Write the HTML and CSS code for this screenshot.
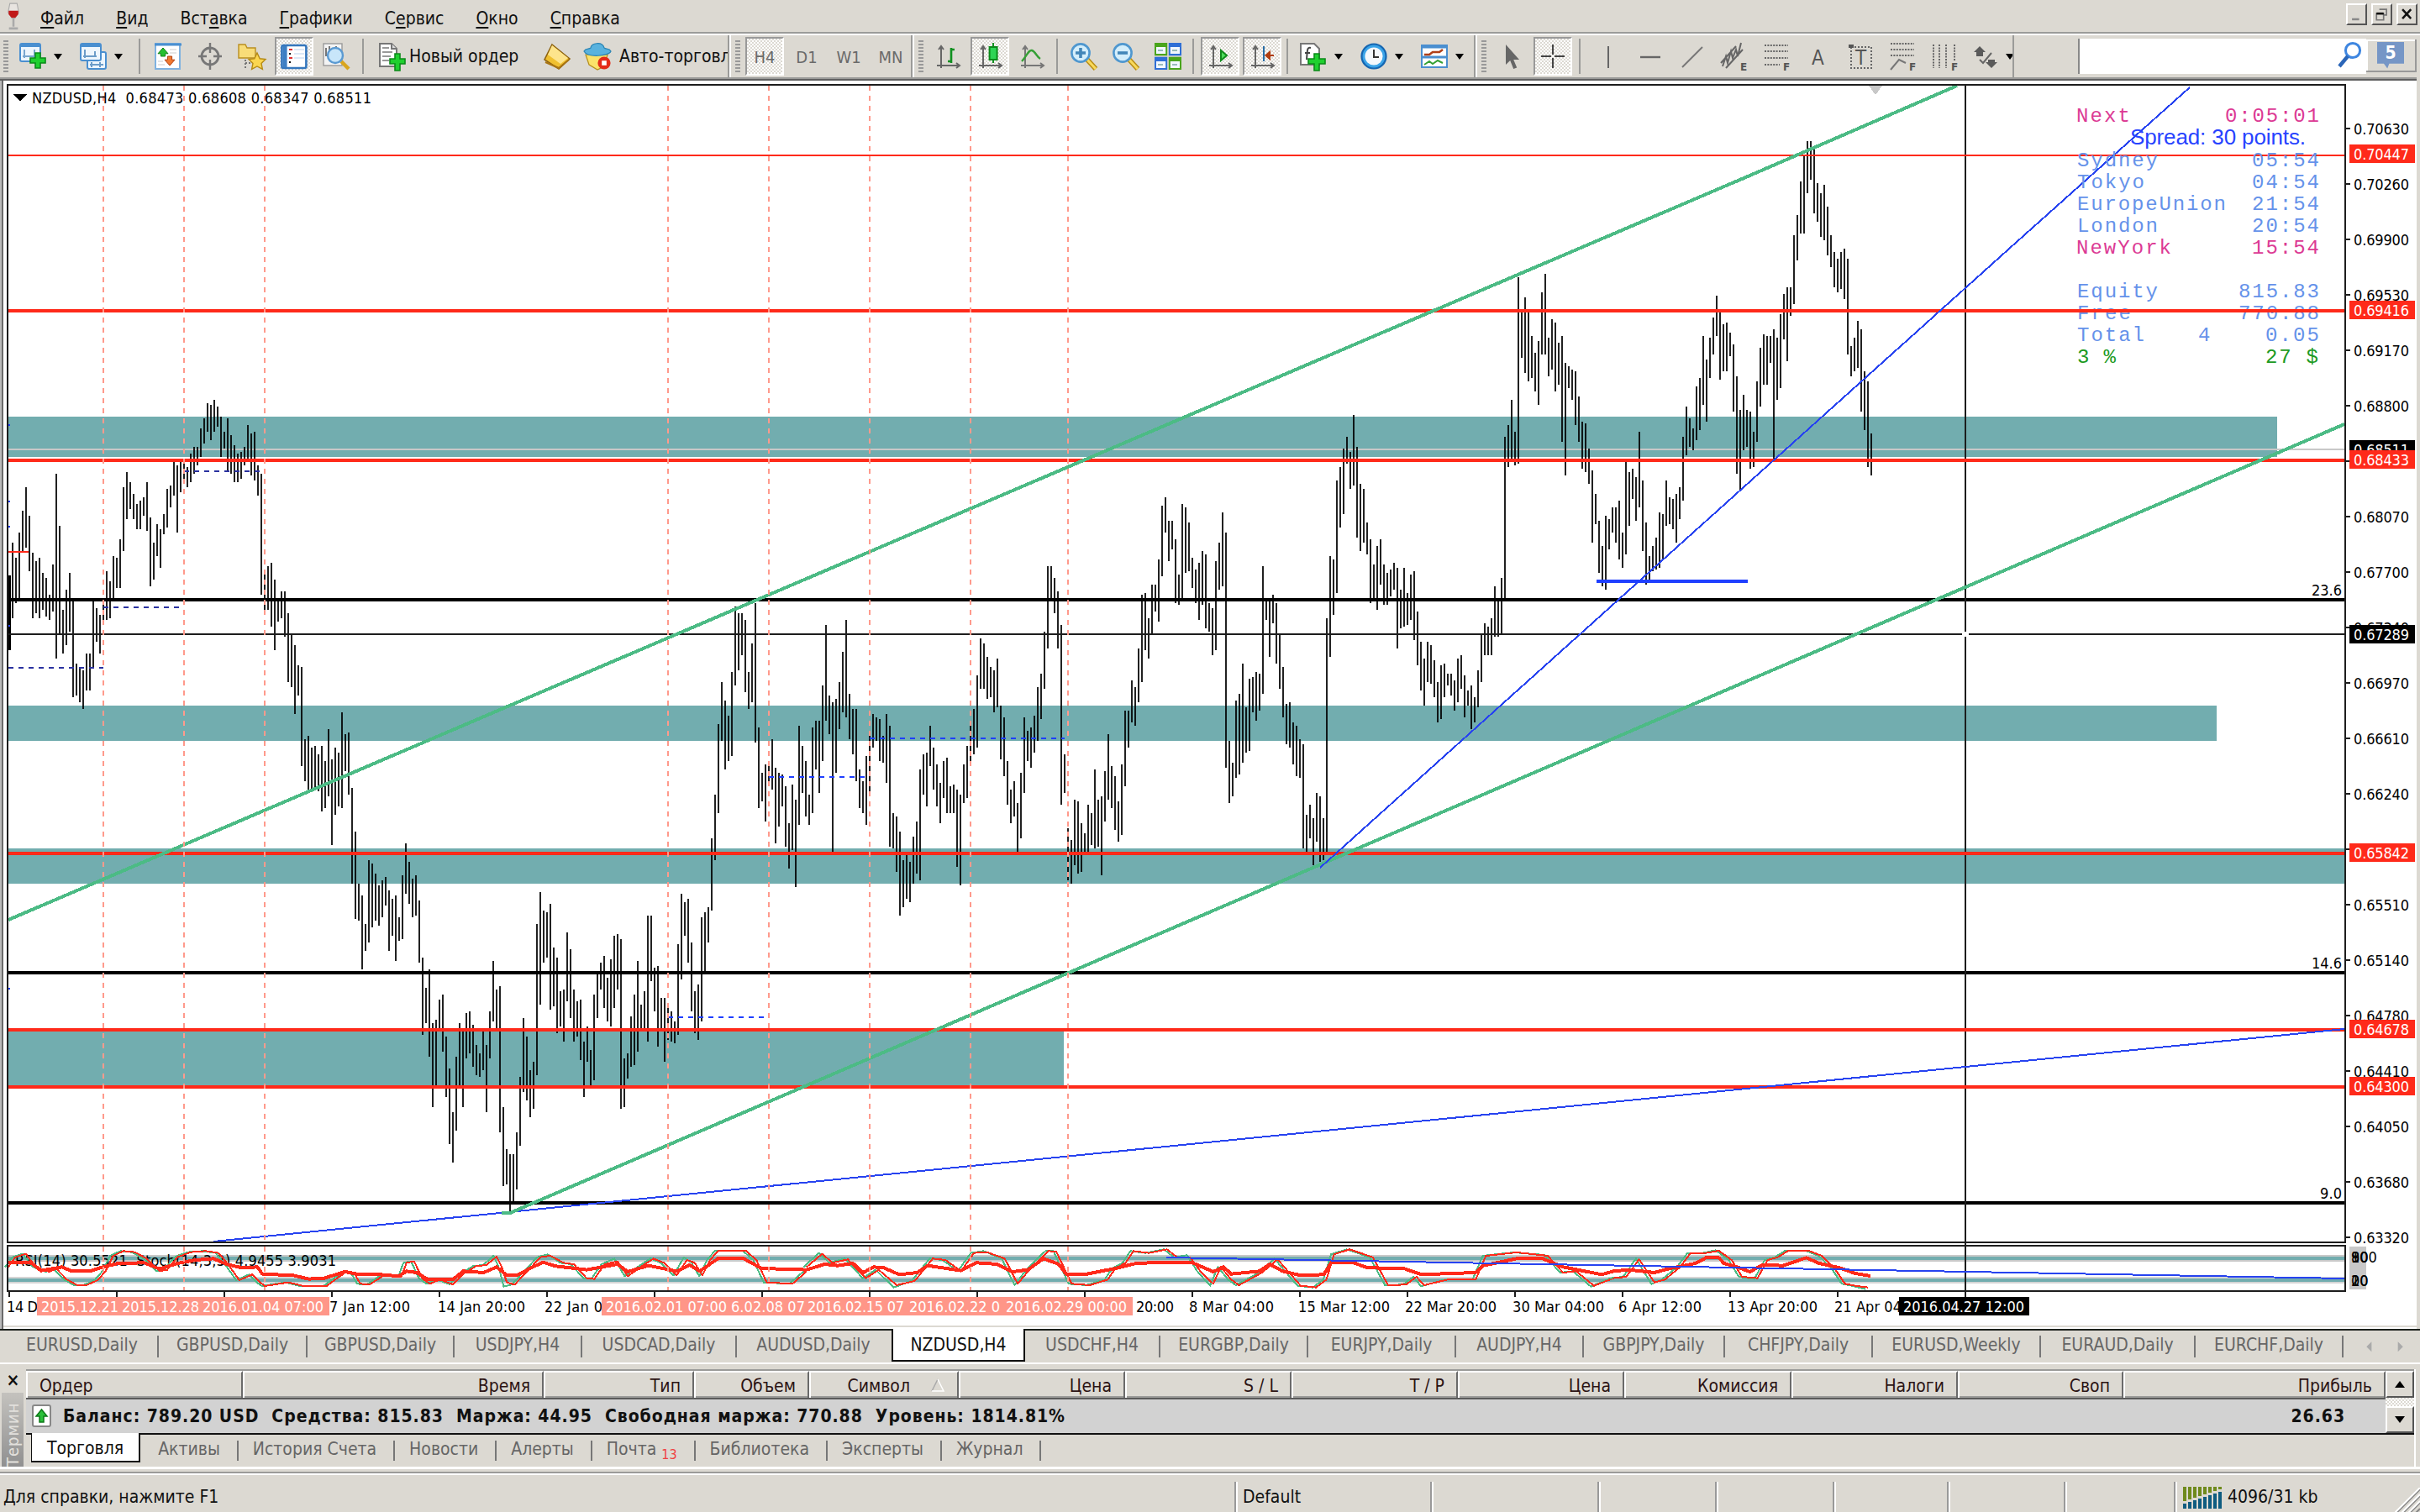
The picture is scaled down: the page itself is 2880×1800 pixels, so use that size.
FILE: index.html
```html
<!DOCTYPE html>
<html lang="ru">

<head>

  <meta charset="utf-8">

  <title>NZDUSD,H4</title>

  <link rel="stylesheet" href="styles.css">

</head>

<body>

<!-- menu -->
<div class="menubar">
  <svg class="logo" viewBox="0 0 8 16"><path d="M2 1h4l1 5-2 3H3L1 6z" fill="#e8e4e0" stroke="#aaa" stroke-width=".5"/><path d="M1.3 5h5.4v2L5 9H3L1.3 7z" fill="#c01818"/><path d="M4 9v5M1.5 15h5" stroke="#aaa" stroke-width="1.2"/></svg>
  <span><u>Ф</u>айл</span>
  <span><u>В</u>ид</span>
  <span>Вст<u>а</u>вка</span>
  <span><u>Г</u>рафики</span>
  <span>С<u>е</u>рвис</span>
  <span><u>О</u>кно</span>
  <span><u>С</u>правка</span>
  <div class="winbtns">
    <b><svg viewBox="0 0 24 26"><path d="M5 20h10" stroke="#888" stroke-width="3"/></svg></b>
    <b><svg viewBox="0 0 24 26"><path d="M8 6h10v8h-4M4 12h10v9H4z" fill="none" stroke="#777" stroke-width="2"/><path d="M4 12h10" stroke="#000" stroke-width="3"/></svg></b>
    <b><svg viewBox="0 0 24 26"><path d="M5 6l12 13M17 6L5 19" stroke="#111" stroke-width="3"/></svg></b>
  </div>
</div>

<!-- toolbars -->
<div class="toolbar">

  <div class="band band-main">
    <i class="grip"></i>
    <span class="drop"><svg viewBox="0 0 16 16"><rect x=".5" y=".5" width="12" height="10.5" rx="1" fill="#eef6fd" stroke="#4a8fd0"/><path d="M1 1.5h11" stroke="#4a8fd0" stroke-width="2"/><path d="M3 4v5M2 8h8M9 4v5" stroke="#7aa7cf" fill="none"/><path d="M9.5 6h3v3h3v3h-3v3h-3v-3h-3V9h3z" fill="#1fd02f" stroke="#0b8a1a" stroke-width=".8"/></svg><em></em></span>
    <span class="drop"><svg viewBox="0 0 16 16"><rect x="4.5" y="5.5" width="11" height="10" rx="1" fill="#eef6fd" stroke="#4a8fd0"/><rect x=".5" y=".5" width="12" height="10" rx="1" fill="#eef6fd" stroke="#4a8fd0"/><path d="M1 1.5h11" stroke="#4a8fd0" stroke-width="2"/><path d="M3 4v5M2 8h8M9 5v3M6 13h8M7 11.5v3M12 11.5v3" stroke="#6c9cc8" fill="none"/></svg><em></em></span>
    <i class="sep"></i>
    <span class="tool"><svg viewBox="0 0 16 16"><rect x=".5" y=".5" width="14.5" height="15" fill="#fff" stroke="#7fb2e0"/><path d="M0 1h16" stroke="#4a8fd0" stroke-width="1.5"/><path d="M5 3l3 3.4H6.3V8H3.7V6.4H2z" fill="#25c030" stroke="#108018" stroke-width=".5"/><path d="M9 13.500l3-3.400h-1.700V8H7.700v2.100H6z" fill="#f07830" stroke="#b04010" stroke-width=".5"/><path d="M9 4h4M9 6h4M2 11h3M2 13h4" stroke="#ccc" stroke-width=".6"/></svg></span>
    <span class="tool"><svg viewBox="0 0 16 16"><circle cx="8" cy="8" r="5" fill="none" stroke="#777" stroke-width="1.4"/><path d="M8 0v6M8 10v6M1 8h5M10 8h5" stroke="#777" stroke-width="1.2"/></svg></span>
    <span class="tool"><svg viewBox="0 0 16 16"><path d="M0 2V1h4l1 2h5v6H0z" fill="#f8dc78" stroke="#b98e20" stroke-width=".7"/><path d="M4 10v6M4 12h3" stroke="#777" stroke-dasharray="1 1"/><path d="M11 6l1.600 3.400 3.400.4-2.500 2.400.7 3.500-3.200-1.700-3.200 1.700.7-3.500L6 9.800l3.400-.4z" fill="#fbd650" stroke="#b58a15" stroke-width=".7"/></svg></span>
    <span class="tool on"><svg viewBox="0 0 16 16"><rect x=".7" y="1.500" width="14.500" height="13.500" rx="1" fill="#fff" stroke="#3577bd" stroke-width="1.300"/><path d="M2.500 2v12.500" stroke="#3d7fc4" stroke-width="2.600"/><path d="M5 4h2M5 9h2" stroke="#e03030"/><path d="M5 6.500h1M5 11.500h1" stroke="#111"/><path d="M8 4h6M8 6.500h6M8 9h6" stroke="#b9d2ee" stroke-width=".6"/></svg></span>
    <span class="tool"><svg viewBox="0 0 16 16"><rect x=".5" y=".5" width="11" height="13" fill="#f4f4f4" stroke="#999" stroke-width=".7"/><path d="M2 3v5M8 2v4M4 2v3" stroke="#777"/><path d="M11 11l4.500 4.500" stroke="#d9a51e" stroke-width="2.200"/><circle cx="7.500" cy="7.500" r="4.500" fill="#c8e6fa" stroke="#5b9ad2" stroke-width="1.200"/></svg></span>
    <i class="sep"></i>
    <span class="wide order"><svg viewBox="0 0 16 16"><path d="M.5.500h7l3 3V14H.5z" fill="#fff" stroke="#777"/><path d="M7.500.500v3h3" fill="#ddd" stroke="#777"/><path d="M2 3h4M2 5.500h6M2 8h5M2 10.500h4" stroke="#999"/><path d="M9.500 6.500h3v3h3v3h-3v4h-3v-4h-3v-3h3z" fill="#1fd02f" stroke="#0b8a1a" stroke-width=".8"/></svg>Новый ордер</span>
    <span class="tool book"><svg viewBox="0 0 16 16"><path d="M5 1l10.500 8.500L9 15.500.5 10z" fill="#f0c030" stroke="#8d6210" stroke-width=".8"/><path d="M5 1.500l9.500 7.500-4.500 3.500L2.500 7z" fill="#fde48c"/><path d="M1 11.500l8 3.500 6-5" fill="none" stroke="#a87413"/></svg></span>
    <span class="wide auto"><svg viewBox="0 0 16 16"><path d="M1 7h13l-2 7-4 2-5-3z" fill="#fbe26a" stroke="#b58e1c" stroke-width=".6"/><path d="M0 5c1-2 3-1 4-2 0-3 7-4 8 0 1 1 3 0 4 2-1 3-14 4-16 0z" fill="#59b2de" stroke="#2b84b3" stroke-width=".6"/><circle cx="12" cy="12" r="3.800" fill="#e42a18"/><rect x="10.600" y="10.600" width="2.800" height="2.800" fill="#fff"/></svg>Авто-торговля</span>
  </div>

  <div class="band band-tf">
    <i class="grip"></i>
    <span class="tool on tf">H4</span>
    <span class="tool tf">D1</span>
    <span class="tool tf">W1</span>
    <span class="tool tf">MN</span>
  </div>

  <div class="band band-charts">
    <i class="grip"></i>
    <span class="tool"><svg viewBox="0 0 16 16"><path d="M4 2v13M1.500 13.500H15M2.500 4L4 2l1.500 2M13 12l2 1.500-2 1.500" fill="none" stroke="#666"/><path d="M10 3v9M10 4h2M8 11h2" stroke="#109020" stroke-width="1.300"/></svg></span>
    <span class="tool on"><svg viewBox="0 0 16 16"><path d="M4 2v13M1.500 13.500H15M2.500 4L4 2l1.500 2M13 12l2 1.500-2 1.500" fill="none" stroke="#666"/><path d="M10 0v12" stroke="#109020"/><rect x="7.800" y="2.500" width="4.500" height="7.500" fill="#2ed455" stroke="#0b8a1a"/></svg></span>
    <span class="tool"><svg viewBox="0 0 16 16"><path d="M4 2v13M1.500 13.500H15M2.500 4L4 2l1.500 2M13 12l2 1.500-2 1.500" fill="none" stroke="#777"/><path d="M2 11C5 8 6 4 8 4.500s3 4 5 5" fill="none" stroke="#35a035" stroke-width="1.200"/></svg></span>
    <i class="sep"></i>
    <span class="tool"><svg viewBox="0 0 16 16"><path d="M9.500 9.500l5.500 6" stroke="#b98d14" stroke-width="3"/><path d="M9.500 9.500l5.500 6" stroke="#f8d95c" stroke-width="1.500"/><circle cx="6" cy="6" r="5.300" fill="#d4eefb" stroke="#4f97cf" stroke-width="1.300"/><path d="M3 6h6M6 3v6" stroke="#4386b8" stroke-width="1.800"/></svg></span>
    <span class="tool"><svg viewBox="0 0 16 16"><path d="M9.500 9.500l5.500 6" stroke="#b98d14" stroke-width="3"/><path d="M9.500 9.500l5.500 6" stroke="#f8d95c" stroke-width="1.500"/><circle cx="6" cy="6" r="5.300" fill="#d4eefb" stroke="#4f97cf" stroke-width="1.300"/><path d="M3 6h6" stroke="#4386b8" stroke-width="1.800"/></svg></span>
    <span class="tool"><svg viewBox="0 0 16 16"><path d="M0 0h7.600v7.600H0zM8.400 8.400H16V16H8.400z" fill="#4aa51c"/><path d="M8.400 0H16v7.600H8.400zM0 8.400h7.600V16H0z" fill="#2f6fd6"/><path d="M1 2.500h5.600v4H1zM9.400 2.500H15v4H9.400zM1 11h5.600v4H1zM9.400 11H15v4H9.400z" fill="#f2f8ff"/><path d="M2 4.500h3M10.500 4.500h3M2 13h3M10.500 13h3" stroke="#9bb"/></svg></span>
    <i class="sep"></i>
    <span class="tool on"><svg viewBox="0 0 16 16"><path d="M4 2v13M1.500 13.500H15M2.500 4L4 2l1.500 2M13 12l2 1.500-2 1.500" fill="none" stroke="#666"/><path d="M8.500 4.500l3.500 3-3.500 3z" fill="#4fdc5c" stroke="#108a1c"/></svg></span>
    <span class="tool on"><svg viewBox="0 0 16 16"><path d="M4 2v13M1.500 13.500H15M2.500 4L4 2l1.500 2M13 12l2 1.500-2 1.500" fill="none" stroke="#666"/><path d="M9 2v9" stroke="#2a6da5"/><path d="M15 7.500h-4M12.500 5.500l-2.300 2 2.300 2z" fill="#c04a18" stroke="#b03c10"/></svg></span>
    <i class="sep"></i>
    <span class="drop"><svg viewBox="0 0 16 16"><path d="M.5.500h8l3 3V13H.5z" fill="#fff" stroke="#777"/><path d="M6.500 3c-2-.5-2 1-2.200 3L4 10M3 6h3" fill="none" stroke="#444"/><path d="M8.500 6.500h3v3h3.500v3h-3.500v4h-3v-4H5v-3h3.500z" fill="#1fd02f" stroke="#0b8a1a" stroke-width=".8"/></svg><em></em></span>
    <span class="drop"><svg viewBox="0 0 16 16"><circle cx="8" cy="8" r="7.800" fill="#1565b0"/><circle cx="8" cy="8" r="6.700" fill="#3ba4e8"/><circle cx="8" cy="8" r="5.300" fill="#f4f8fc"/><path d="M8 4v4.500h3" stroke="#333" fill="none"/></svg><em></em></span>
    <span class="drop"><svg viewBox="0 0 16 16"><rect x=".5" y="1.500" width="15" height="13" fill="#fff" stroke="#4a8fd0"/><path d="M0 2.500h16M0 8.500h16" stroke="#4a8fd0" stroke-width="1.500"/><path d="M2 7h3l2-1.500h4l2-1.500" fill="none" stroke="#b04018" stroke-width="1.300"/><path d="M2 13l3-2 2 1.500 3-2 3 1.500" fill="none" stroke="#35a035"/></svg><em></em></span>
  </div>

  <div class="band band-lines">
    <i class="grip"></i>
    <span class="tool"><svg viewBox="0 0 16 16"><path d="M5 1v12l2.600-2.500 2 5 2-.8-2-4.700H13z" fill="#666"/></svg></span>
    <span class="tool on"><svg viewBox="0 0 16 16"><path d="M8 1v6M8 9v6M1 8h6M9 8h6" stroke="#444"/></svg></span>
    <i class="sep"></i>
    <span class="tool"><svg viewBox="0 0 16 16"><path d="M8 2v13" stroke="#666"/></svg></span>
    <span class="tool"><svg viewBox="0 0 16 16"><path d="M2 8.500h12" stroke="#666" stroke-width="1.200"/></svg></span>
    <span class="tool"><svg viewBox="0 0 16 16"><path d="M2 14.500L14 2.500" stroke="#777"/></svg></span>
    <span class="tool"><svg viewBox="0 0 16 16"><path d="M0 12L9 2M3 15L13 4M1 14l2-6 1 4 2-7 1 4 2-5 1 4 2-8" stroke="#666" fill="none"/><text x="11.500" y="16.500" class="ico">E</text></svg></span>
    <span class="tool"><svg viewBox="0 0 16 16"><path d="M1 1.500h14M1 5h14M1 9h14M1 13h9" stroke="#666" stroke-dasharray="1 .7"/><text x="12" y="16.500" class="ico">F</text></svg></span>
    <span class="tool"><svg viewBox="0 0 16 16"><text x="4" y="13" class="ico big">A</text></svg></span>
    <span class="tool"><svg viewBox="0 0 16 16"><rect x="2.500" y="2.500" width="12" height="12.500" fill="none" stroke="#666" stroke-dasharray="1 1"/><path d="M1 1h3v2H1z" fill="#555"/><text x="5" y="13" class="ico big">T</text></svg></span>
    <span class="tool"><svg viewBox="0 0 16 16"><path d="M1 .5h14M1 4h14M1 7.500h14" stroke="#666" stroke-dasharray="1 .7"/><path d="M1 16l5-6 4 2" fill="none" stroke="#777"/><text x="12" y="16.500" class="ico">F</text></svg></span>
    <span class="tool"><svg viewBox="0 0 16 16"><path d="M1.500 1v14M5 1v14M9 1v14M14 1v10" stroke="#666" stroke-dasharray="1 .7"/><text x="12" y="16.500" class="ico">F</text></svg></span>
    <span class="tool"><svg viewBox="0 0 16 16"><path d="M4 2l3.500 3.500H6V8H2V5.500H.5zM11 15l-3.500-3.500H9V10h4v1.500h1.500z" fill="#5a5a5a"/><path d="M4 10l2 2 5-6" fill="none" stroke="#666"/></svg></span>
    <em class="cutarrow"></em>
  </div>

  <div class="search">
    <svg viewBox="0 0 16 16"><circle cx="10" cy="5.500" r="4.300" fill="none" stroke="#3e86e0" stroke-width="1.500"/><path d="M7 9l-5 6" stroke="#2b66b8" stroke-width="2.200"/></svg>
  </div>
  <div class="mail"><span>5</span></div>

</div>

<!-- chart window, user units are page pixels -->
<svg class="chart" viewBox="0 92 2880 1492">

  <rect x="0" y="92" width="2880" height="1492" fill="#fff"/>
  <path d="M0 93h2876" stroke="#9b9b99" stroke-width="2"/>
  <path d="M0 95h2876" stroke="#5f5f5f" stroke-width="2"/>
  <path d="M1 96v1486" stroke="#bbb" stroke-width="2"/>
  <path d="M3 96v1486" stroke="#6a6a6a" stroke-width="2"/>
  <path d="M2878 92v1490" stroke="#dcd9d2" stroke-width="4"/>
  <path d="M4 1579h2872" stroke="#dcd9d2" stroke-width="2"/>

  <g fill="#72adaf">
    <rect x="10" y="496" width="2700" height="48"/>
    <rect x="10" y="840" width="2628" height="42"/>
    <rect x="10" y="1010" width="2780" height="42"/>
    <rect x="10" y="1226" width="1256" height="68"/>
    <rect x="10" y="1522" width="2780" height="4"/>
  </g>
  <path d="M10 1498h2780" stroke="#c9c9c9" stroke-width="8"/>
  <path d="M10 1498h2780" stroke="#72adaf" stroke-width="4"/>
  <path d="M10 1521h2780M10 1527h2780" stroke="#d5d5d5" stroke-width="2"/>

  <path d="M10 535h2780" stroke="#c8c8c8" stroke-width="2"/>
  <path id="bars" class="bars"/>
  <path d="M11 685v89" stroke="#000" stroke-width="3"/>

  <g class="fib">
    <path d="M10 714h2780M10 1158h2780M10 1432h2780"/>
  </g>
  <path d="M10 755h2780M2339 102v1446" class="cross"/>
  <path d="M2335 755h8" stroke="#fff" stroke-width="6"/>

  <path d="M10 185h2780" class="level thin"/>
  <path d="M10 370h2780M10 548h2780M10 1016h2780M10 1226h2780M10 1294h2780" class="level"/>
  <path d="M254 1478L2790 1225" class="blue"/>
  <path d="M10 657h24" class="level thin"/>

  <path d="M10 1095L2080 210 2329 102M597 1444h10L2790 505" class="channel"/>
  <path d="M1571 1033L2400 288 2606 104" class="blue"/>
  <path d="M1900 692h180" stroke="#1f3fff" stroke-width="4"/>
  <path d="M8 506h4M8 597h4M8 627h4M8 745h4M8 1177h4" stroke="#1f3fff" stroke-width="2"/>
  <path d="M10 795h113M123 723h90M219 561h90" class="pivot old"/>
  <path d="M795 1211h115M915 925h114M1035 879h232" class="pivot"/>

  <path d="M2224 102h16l-8 11z" fill="#c8c8c8"/>

  <!-- indicator window -->
  <text x="18" y="1507" textLength="382">RSI(14) 30.5521  Stoch(14,3,3) 4.9455 3.9031</text>
  <g class="osc">
    <g transform="translate(0 1380) scale(.6124 .3333)">
      <polyline class="sig" points="10,385 24,350 44,338 64,385 89,402 104,392 124,430 144,450 162,450 184,432 199,400 214,345 234,328 256,332 279,355 304,400 319,395 339,350 364,332 394,328 419,335 439,380 459,432 484,412 499,440 509,453 554,440 584,453 629,453 649,425 669,400 684,412 694,445 712,448 744,410 774,420 784,370 799,365 814,425 829,445 849,430 874,447 894,410 919,382 939,378 959,345 969,385 979,455 994,448 1019,400 1044,350 1064,340 1089,370 1109,375 1134,425 1149,428 1169,375 1194,355 1214,418 1239,385 1264,355 1284,370 1309,415 1329,350 1344,370 1359,418 1374,360 1389,328 1444,328 1464,360 1484,440 1534,445 1562,400"/>
      <polyline class="main" points="16,385 30,350 50,338 70,385 95,402 110,392 130,430 150,450 168,450 190,432 205,400 220,345 240,328 262,332 285,355 310,400 325,395 345,350 370,332 400,328 425,335 445,380 465,432 490,412 505,440 515,453 560,440 590,453 635,453 655,425 675,400 690,412 700,445 718,448 750,410 780,420 790,370 805,365 820,425 835,445 855,430 880,447 900,410 925,382 945,378 965,348 975,385 985,440 1000,448 1025,400 1050,350 1070,345 1095,370 1115,375 1140,425 1155,428 1175,375 1200,365 1220,418 1245,385 1270,355 1290,370 1315,415 1335,360 1350,370 1365,415 1380,360 1395,328 1450,328 1470,360 1490,440 1540,445 1568,400"/>
      <polyline class="rsi" points="16,370 60,370 80,398 120,385 140,400 175,400 200,385 230,372 280,370 310,392 345,372 380,360 415,355 440,375 470,388 500,385 510,410 570,415 600,428 630,425 670,402 700,412 740,412 775,418 790,400 810,405 830,428 880,430 900,400 940,405 965,385 985,415 1005,415 1030,390 1055,368 1080,382 1140,395 1200,375 1220,402 1260,380 1315,400 1340,378 1360,400 1395,355 1445,355 1480,390 1568,395"/>
    </g>
    <g transform="translate(960 1380) scale(.6124 .3333)">
      <polyline class="sig" points="-6,385 24,335 44,370 74,355 109,425 134,395 169,458 204,435 239,355 264,360 294,400 319,335 344,328 379,355 404,450 429,390 464,328 479,326 509,445 544,450 579,430 594,390 614,370 629,328 659,335 694,322 714,350 739,343 759,400 784,452 799,385 819,430 834,450 879,405 909,355 939,420 954,452 984,458 1004,430 1019,340 1049,322 1094,350 1124,450 1159,448 1179,420 1194,454 1244,428 1294,430 1314,345 1374,333 1434,342 1464,405 1489,400 1524,455 1562,425"/>
      <polyline class="main" points="0,385 30,338 50,370 80,358 115,425 140,395 175,450 210,435 245,355 270,360 300,400 325,335 350,332 385,355 410,445 435,390 470,328 485,330 515,445 550,450 585,430 600,390 620,370 635,328 665,335 700,322 720,350 745,350 765,400 790,445 805,385 825,430 840,450 885,405 915,358 945,420 960,452 990,458 1010,430 1025,340 1055,322 1100,350 1130,450 1165,448 1185,420 1200,450 1250,428 1300,430 1320,345 1380,333 1440,345 1470,405 1495,400 1530,452 1568,425"/>
      <polyline class="rsi" points="0,395 35,375 60,380 90,372 110,405 130,385 150,388 180,412 215,405 235,380 300,398 330,370 370,375 400,402 430,395 460,355 490,375 505,412 545,410 600,390 640,372 700,368 750,370 790,402 810,385 825,410 880,400 900,375 925,400 960,415 1005,412 1020,368 1060,368 1090,388 1160,390 1195,412 1300,405 1315,380 1380,355 1430,355 1470,385 1545,412 1568,400"/>
    </g>
    <g transform="translate(1920 1380) scale(.6124 .3333)">
      <polyline class="sig" points="-6,425 19,420 44,355 74,446 94,430 124,385 144,335 174,335 199,325 224,360 244,420 274,428 294,360 314,350 334,327 374,327 399,345 424,390 444,445 464,452 490,464"/>
      <polyline class="main" points="0,425 25,420 50,358 80,440 100,430 130,385 150,335 180,335 205,327 230,360 250,420 280,425 300,360 320,350 340,327 380,327 405,345 430,390 450,445 470,452 495,458"/>
      <polyline class="rsi" points="0,400 30,395 80,405 110,390 160,372 180,352 205,352 215,372 240,385 265,402 290,378 330,380 375,352 400,372 440,388 470,408 500,417"/>
    </g>
  </g>
  <path d="M1388 1497L2790 1522" class="blue"/>

  <!-- week separators -->
  <path d="M123 102v1376M219 102v1376M315 102v1376M795 102v1376M915 102v1376M1035 102v1376M1155 102v1376M1271 102v1376M123 1484v52M219 1484v52M315 1484v52M795 1484v52M915 1484v52M1035 1484v52M1155 1484v52M1271 1484v52" class="weeks"/>

  <!-- frames -->
  <path d="M9 100v1380M8 101h2784M2791 100v1380M8 1479h2784M9 1482v56M8 1483h2784M2791 1482v56M8 1537h2784" class="frame"/>

  <!-- panel in the corner -->
  <g class="hud">
    <g class="pink">
      <text x="2471" y="145" textLength="64">Next</text><text x="2648" y="145" textLength="112">0:05:01</text>
      <text x="2471" y="302" textLength="113">NewYork</text><text x="2680" y="302" textLength="80">15:54</text>
    </g>
    <text x="2472" y="198" textLength="96">Sydney</text><text x="2680" y="198" textLength="80">05:54</text>
    <text x="2472" y="224" textLength="80">Tokyo</text><text x="2680" y="224" textLength="80">04:54</text>
    <text x="2472" y="250" textLength="177">EuropeUnion</text><text x="2680" y="250" textLength="80">21:54</text>
    <text x="2472" y="276" textLength="96">London</text><text x="2680" y="276" textLength="80">20:54</text>
    <text x="2472" y="354" textLength="96">Equity</text><text x="2664" y="354" textLength="96">815.83</text>
    <text x="2472" y="380" textLength="64">Free</text><text x="2664" y="380" textLength="96">770.88</text>
    <text x="2472" y="406" textLength="80">Total</text><text x="2616" y="406">4</text><text x="2696" y="406" textLength="64">0.05</text>
    <g class="green">
      <text x="2472" y="432" textLength="46">3 %</text><text x="2696" y="432" textLength="63">27 $</text>
    </g>
    <path d="M2664 370h96M2472 370h64" stroke="#ff2a1a" stroke-width="4"/>
  </g>
  <text class="spread" x="2535" y="172" textLength="209">Spread: 30 points.</text>

  <g>
    <path d="M16 112h16l-8 9z"/>
    <text x="38" y="123" textLength="404">NZDUSD,H4  0.68473 0.68608 0.68347 0.68511</text>
    <text x="2751" y="709" textLength="36">23.6</text>
    <text x="2751" y="1153" textLength="36">14.6</text>
    <text x="2761" y="1427" textLength="26">9.0</text>
  </g>

  <g id="prices"></g>

  <rect x="2796" y="1484" width="20" height="51" fill="#c8c8c8"/>
  <text x="2798" y="1503">100</text><text x="2798" y="1503">80</text><text x="2798" y="1503">90</text>
  <text x="2798" y="1531">20</text><text x="2798" y="1531">10</text><text x="2798" y="1531">0</text>

  <!-- time axis -->
  <path id="ticks" class="frame"/>
  <g>
    <text x="8" y="1562" textLength="37">14 D</text>
    <text x="392" y="1562" textLength="96">7 Jan 12:00</text>
    <text x="521" y="1562" textLength="104">14 Jan 20:00</text>
    <text x="648" y="1562" textLength="69">22 Jan 0</text>
    <text x="1352" y="1562" textLength="45">20:00</text>
    <text x="1415" y="1562" textLength="101">8 Mar 04:00</text>
    <text x="1545" y="1562" textLength="109">15 Mar 12:00</text>
    <text x="1672" y="1562" textLength="109">22 Mar 20:00</text>
    <text x="1800" y="1562" textLength="109">30 Mar 04:00</text>
    <text x="1926" y="1562" textLength="99">6 Apr 12:00</text>
    <text x="2056" y="1562" textLength="107">13 Apr 20:00</text>
    <text x="2183" y="1562" textLength="80">21 Apr 04</text>
  </g>
  <path d="M44 1544h348v22H44zM716 1544h632v22H716z" fill="#ff9688"/>
  <rect x="2260" y="1544" width="155" height="22"/>
  <g class="white">
    <text x="49" y="1562" textLength="92">2015.12.21</text>
    <text x="145" y="1562" textLength="92">2015.12.28</text>
    <text x="241" y="1562" textLength="144">2016.01.04 07:00</text>
    <text x="721" y="1562" textLength="144">2016.02.01 07:00</text>
    <text x="870" y="1562" textLength="88">6.02.08 07</text>
    <text x="961" y="1562" textLength="115">2016.02.15 07</text>
    <text x="1082" y="1562" textLength="108">2016.02.22 0</text>
    <text x="1197" y="1562" textLength="144">2016.02.29 00:00</text>
    <text x="2265" y="1562" textLength="144">2016.04.27 12:00</text>
  </g>

</svg>

<!-- chart tabs -->
<div class="charttabs">
  <span>EURUSD,Daily</span><span>GBPUSD,Daily</span><span>GBPUSD,Daily</span><span>USDJPY,H4</span><span>USDCAD,Daily</span><span class="last">AUDUSD,Daily</span><span class="active">NZDUSD,H4</span><span>USDCHF,H4</span><span>EURGBP,Daily</span><span>EURJPY,Daily</span><span>AUDJPY,H4</span><span>GBPJPY,Daily</span><span>CHFJPY,Daily</span><span>EURUSD,Weekly</span><span>EURAUD,Daily</span><span>EURCHF,Daily</span>
  <svg viewBox="0 0 90 38"><path d="M33 13v12l-6-6zM64 13v12l6-6z" fill="#aaa"/></svg>
</div>

<!-- terminal -->
<div class="terminal">

  <div class="side">
    <div class="x">×</div>
    <div class="caption">Термин</div>
  </div>

  <div class="panel">
    <div class="grid">
      <div class="cols">
        <div class="left">Ордер</div><div>Время</div><div>Тип</div><div>Объем</div>
        <div class="sorted">Символ<svg viewBox="0 0 16 16"><path d="M8 1L1 15" stroke="#aaa" stroke-width="1.500"/><path d="M8 1l7 14H1" fill="none" stroke="#fff" stroke-width="1.500"/></svg></div>
        <div>Цена</div><div>S / L</div><div>T / P</div><div>Цена</div><div>Комиссия</div><div>Налоги</div><div>Своп</div><div>Прибыль</div>
      </div>
      <div class="balance">
        <svg viewBox="0 0 24 28"><rect x="1" y="1" width="21" height="25" rx="2" fill="#fff" stroke="#888" stroke-width="2"/><path d="M11.500 6l6.500 8h-4v7h-5v-7h-4z" fill="#2ac03a" stroke="#0c7a18" stroke-width="1.500"/></svg>
        <b>Баланс: 789.20 USD&nbsp; Средства: 815.83&nbsp; Маржа: 44.95&nbsp; Свободная маржа: 770.88&nbsp; Уровень: 1814.81%</b>
        <b class="profit">26.63</b>
      </div>
    </div>
    <div class="scroll">
      <i><svg viewBox="0 0 16 16"><path d="M8 4l6 8H2z"/></svg></i>
      <i><svg viewBox="0 0 16 16"><path d="M8 12l6-8H2z"/></svg></i>
    </div>
    <div class="tabs">
      <span class="active">Торговля</span><span class="first">Активы</span><span>История Счета</span><span>Новости</span><span>Алерты</span><span>Почта<sub>13</sub></span><span>Библиотека</span><span>Эксперты</span><span>Журнал</span>
    </div>
  </div>

</div>

<!-- status bar -->
<div class="status">
  <div>Для справки, нажмите F1</div>
  <div>Default</div>
  <div></div><div></div><div></div><div></div><div></div><div></div>
  <div class="net">
    <svg viewBox="0 0 48 26">
      <path id="net-top" stroke="#6f8a1c" stroke-width="4"/>
      <path id="net-bottom" stroke="#0f5c80" stroke-width="4"/>
    </svg>
    4096/31 kb
    <svg class="resize" viewBox="0 0 30 30"><path d="M2 30L30 2M10 30L30 10M18 30L30 18M25 30l5-5" stroke="#888" stroke-width="2"/><path d="M0 30L30 0M8 30L30 8M16 30L30 16" stroke="#fff" stroke-width="2"/></svg>
  </div>
</div>

<script src="chart.js"></script>

</body>

</html>
```
FILE: styles.css
```css
body {
  margin: 0;
  width: 2880px;
  height: 1800px;
  overflow: hidden;
  background-color: #dcd9d2;
  color: #111;
  font-family: "DejaVu Sans Condensed", "DejaVu Sans", sans-serif;
  font-stretch: condensed;
  font-size: 21px;
  white-space: nowrap;
}

/* menu */

.menubar {
  box-sizing: border-box;
  display: flex;
  align-items: center;
  gap: 38px;
  height: 42px;
  padding-top: 4px;
  border-bottom: 2px solid #fff;
  box-shadow: inset 0 -2px #9b9b99;
  font-size: 21px;
}

.menubar u {
  text-decoration-thickness: 2px;
  text-underline-offset: 3px;
}

.logo {
  width: 18px;
  height: 34px;
  margin: -6px -15px 0 7px;
}

.winbtns {
  display: flex;
  gap: 5px;
  margin: -10px 3px 0 auto;
}

.winbtns b {
  box-sizing: border-box;
  width: 25px;
  height: 26px;
  border: 2px solid #fff;
  border-right-color: #555;
  border-bottom-color: #555;
}

.winbtns svg {
  display: block;
  width: 22px;
  height: 22px;
}

/* toolbars */

.toolbar {
  display: flex;
  height: 50px;
}

.band {
  box-sizing: border-box;
  display: flex;
  align-items: center;
  height: 50px;
  border-right: 2px solid #9b9b99;
  overflow: hidden;
}

.band + .band {
  border-left: 2px solid #fff;
}

.band-main {
  width: 868px;
}

.band-tf {
  width: 218px;
}

.band-charts {
  width: 670px;
}

.band-lines {
  width: 641px;
}

.grip {
  flex: none;
  width: 6px;
  height: 38px;
  margin: 0 5px 0 4px;
  background: repeating-linear-gradient(#999 0 2px, #dcd9d2 2px 4px);
}

.band + .band .grip {
  margin: 0 4px 0 5px;
}

.sep {
  flex: none;
  width: 2px;
  height: 42px;
  margin: 0 8px 0 6px;
  background-color: #9b9b99;
}

.band-charts .sep {
  margin: 0 6px 0 4px;
}

.tool {
  box-sizing: border-box;
  flex: none;
  display: flex;
  align-items: center;
  justify-content: center;
  width: 50px;
  height: 46px;
}

.tool svg, .drop svg, .wide svg, .search svg {
  flex: none;
  width: 32px;
  height: 32px;
  overflow: visible;
}

.on {
  width: 46px;
  margin: 0 2px;
  border: 2px solid #999;
  border-right-color: #fff;
  border-bottom-color: #fff;
  background: repeating-conic-gradient(#dcd9d2 0 25%, #fff 0 50%) 0 0 / 4px 4px;
}

.tf {
  color: #6a6a6a;
  font-size: 20px;
  padding-top: 2px;
}

.drop {
  flex: none;
  display: flex;
  align-items: center;
  width: 72px;
  box-sizing: border-box;
  padding-left: 8px;
}

.drop em, .cutarrow {
  flex: none;
  border: 5px solid transparent;
  border-top: 7px solid #000;
  border-bottom: 0;
  margin-left: 9px;
}

.cutarrow {
  margin-left: -2px;
}

.wide {
  box-sizing: border-box;
  flex: none;
  display: flex;
  align-items: center;
  gap: 4px;
  font-size: 21px;
}

.order {
  width: 197px;
  padding-left: 10px;
}

.auto {
  padding-left: 7px;
  gap: 10px;
}

.ico {
  font: bold 6px "DejaVu Sans", sans-serif;
  fill: #555;
}

.ico.big {
  font: 12px "DejaVu Sans Condensed", sans-serif;
}

.search {
  box-sizing: border-box;
  display: flex;
  align-items: center;
  justify-content: flex-end;
  width: 343px;
  height: 42px;
  margin: 4px 0 0 76px;
  padding-right: 4px;
  padding-bottom: 4px;
  background-color: #fff;
  border-left: 2px solid #888;
}

.mail {
  display: flex;
  align-items: center;
  justify-content: center;
  width: 58px;
  height: 37px;
  margin-top: 5px;
  border-right: 2px solid #999;
  border-bottom: 2px solid #999;
  box-shadow: inset 2px 2px #fff;
}

.mail span {
  width: 32px;
  height: 32px;
  line-height: 26px;
  background-color: #7696c6;
  clip-path: polygon(0 0, 100% 0, 100% 82%, 45% 82%, 38% 100%, 25% 82%, 0 82%);
  color: #fff;
  font-weight: bold;
  text-align: center;
}

/* chart */

.chart {
  display: block;
  width: 2880px;
  height: 1492px;
  shape-rendering: crispEdges;
  font-size: 18px;
}

.chart text {
  white-space: pre;
}

.chart path, .chart polyline {
  stroke-linejoin: round;
}

.bars {
  stroke: #000;
  stroke-opacity: .87;
  stroke-width: 2;
}

.fib {
  stroke: #000;
  stroke-width: 4;
}

.cross, .frame {
  fill: none;
  stroke: #1d1d1d;
  stroke-width: 2;
}

.level {
  stroke: #ff2a1a;
  stroke-width: 4;
}

.thin {
  stroke-width: 2;
}

.channel {
  fill: none;
  stroke: #4cbb85;
  stroke-width: 4;
}

.blue {
  fill: none;
  stroke: #2743f0;
  stroke-width: 2;
}

.pivot {
  stroke: #1f3fff;
  stroke-width: 2;
  stroke-dasharray: 6 6;
}

.old {
  stroke: #2a32a0;
}

.weeks {
  stroke: #ff9a8c;
  stroke-width: 2;
  stroke-dasharray: 6 6;
}

.osc polyline {
  fill: none;
  vector-effect: non-scaling-stroke;
}

.rsi {
  stroke: #ff2a1a;
  stroke-width: 4;
}

.main {
  stroke: #ff2a1a;
  stroke-width: 2;
}

.sig {
  stroke: #4cbb85;
  stroke-width: 2;
}

.hud {
  font-family: "Liberation Mono", monospace;
  font-size: 24px;
  fill: #6592ea;
}

.pink {
  fill: #dc3a94;
}

.green {
  fill: #1c9a22;
}

.spread {
  font-family: "Liberation Sans", sans-serif;
  font-size: 26px;
  fill: #2743ff;
}

.white {
  fill: #fff;
}

.tag-red {
  fill: #ff2a1a;
}

/* chart tabs */

.charttabs {
  display: grid;
  grid-template-columns: 181px 177px 175px 152px 184px 184px 159px 161px 176px 176px 152px 168px 176px 200px 184px 176px 91px;
  box-sizing: border-box;
  height: 42px;
  margin-top: -2px;
  padding-left: 8px;
  border-top: 2px solid #1a1f1a;
  border-bottom: 2px solid #fff;
  color: #666;
  position: relative;
}

.charttabs span {
  height: 26px;
  margin-top: 6px;
  line-height: 22px;
  text-align: center;
  border-right: 2px solid #777;
}

.charttabs .last {
  border-right-color: transparent;
}

.charttabs .active {
  height: 37px;
  margin-top: -2px;
  line-height: 38px;
  background-color: #fff;
  color: #111;
  border: 2px solid #111;
  border-top: 0;
}

/* terminal */

.terminal {
  display: flex;
  box-sizing: border-box;
  height: 125px;
  padding-top: 6px;
  border-bottom: 3px solid #fff;
}

.side {
  width: 31px;
}

.x {
  height: 28px;
  line-height: 26px;
  text-align: center;
  font-weight: bold;
}

.caption {
  width: 26px;
  height: 88px;
  margin-left: 2px;
  overflow: hidden;
  background: linear-gradient(#909090, #c4c2be);
  color: #e2e0dc;
  writing-mode: vertical-rl;
  transform: rotate(180deg);
  line-height: 26px;
  font-size: 20px;
  letter-spacing: 1px;
}

.panel {
  display: grid;
  grid-template-columns: 2808px 34px;
  grid-template-rows: 78px 38px;
  border-right: 2px solid #fff;
}

.grid {
  border-top: 2px solid #9b9b99;
  border-bottom: 2px solid #111;
  box-sizing: border-box;
}

.cols {
  display: grid;
  grid-template-columns: 258px 358px 179px 137px 178px 198px 198px 198px 198px 199px 198px 197px 312px;
  height: 32px;
  border-bottom: 2px solid #5a5a5a;
  color: #2c1414;
}

.cols div {
  box-sizing: border-box;
  padding: 3px 14px 0;
  line-height: 27px;
  text-align: right;
  border: 2px solid #fff;
  border-bottom: 0;
  border-right-color: #6a6a6a;
  box-shadow: inset 0 -2px #9b9b99;
}

.cols .left {
  text-align: left;
}

.cols svg {
  width: 18px;
  height: 16px;
  margin-left: 24px;
}

.balance {
  display: flex;
  align-items: center;
  height: 40px;
  padding-left: 7px;
  background-color: #d2d2d2;
  letter-spacing: 0.95px;
}

.balance svg {
  width: 24px;
  height: 28px;
  margin-right: 13px;
}

.profit {
  margin: 0 48px 0 auto;
}

.scroll {
  display: flex;
  flex-direction: column;
  justify-content: space-between;
  border-top: 2px solid #9b9b99;
  border-bottom: 2px solid #111;
  background: repeating-conic-gradient(#dcd9d2 0 25%, #fff 0 50%) 0 0 / 4px 4px;
}

.scroll i {
  display: flex;
  align-items: center;
  justify-content: center;
  height: 28px;
  background-color: #dcd9d2;
  border: 2px solid #fff;
  border-right-color: #555;
  border-bottom-color: #555;
}

.scroll svg {
  width: 16px;
}

.tabs {
  display: flex;
  grid-column: 1 / 3;
  padding-left: 6px;
  color: #666;
}

.tabs span {
  height: 24px;
  margin-top: 7px;
  padding: 0 20px 0 17px;
  line-height: 21px;
  border-right: 2px solid #777;
}

.tabs .first {
  padding-left: 21px;
}

.tabs .active {
  height: 33px;
  margin-top: -2px;
  padding: 0 18px;
  line-height: 37px;
  background-color: #fff;
  color: #111;
  border: 2px solid #111;
  border-top: 0;
  border-left-width: 1px;
}

.tabs sub {
  margin-left: 6px;
  font-size: 16px;
  line-height: 0;
  color: #f04040;
}

/* status */

.status {
  display: grid;
  grid-template-columns: 1469px 233px 199px 140px 140px 136px 139px 131px 293px;
  box-sizing: border-box;
  height: 51px;
  margin-top: 3px;
  padding: 10px 0 2px;
  border-top: 2px solid #9b9b99;
  box-shadow: inset 0 2px #fff;
}

.status div {
  padding-left: 8px;
  line-height: 37px;
  border-left: 2px solid #999;
  box-shadow: inset 2px 0 #fff;
}

.status div:first-child {
  padding-left: 4px;
  border: 0;
  box-shadow: none;
}

.status .net {
  display: flex;
  align-items: center;
  gap: 6px;
}

.net svg {
  width: 48px;
  height: 26px;
}

.net .resize {
  width: 30px;
  height: 30px;
  margin: 6px 0 0 auto;
}
```
FILE: chart.js
```js
// high,low pairs of the bars, 4px per bar, each run in its own units
var runs = [
  { y: 400, k: 1.742, d: [
    497,652, 429,585, 460,553, 407,547, 362,447, 314,439, 373,488, 449,585, 467,574, 460,585,
    491,567, 502,581, 537,588, 474,571, 286,668, 394,617, 568,658, 526,640, 491,613, 547,748,
    679,745, 686,759, 693,773, 658,735, 659,735, 547,690, 564,634, 578,658, 550,588, 488,588,
    509,585, 456,547, 460,523, 422,523, 314,446, 282,380, 303,359, 328,380, 348,401, 341,401,
    335,373, 303,404, 376,519, 429,505, 390,456, 401,481, 369,411, 317,397, 310,355, 261,331,
    268,408, 258,324, 265,300, 272,314, 244,303, 230,286, 230,268, 192,251, 171,223, 139,199,
    143,216, 132,199, 146,188, 167,251, 199,234, 171,282, 206,286, 226,303, 244,303, 240,296,
    230,268, 185,258, 202,289, 199,300, 268,331, 286,537, 495,568, 477,568, 470,602, 505,652,
    547,592, 530,585, 530,624, 575,718, 617,728, 641,783, 683,745, 686,891, 836,922, 829,943,
    853,940, 850,938, 867,943, 850,986, 882,979, 815,954, 878,1056, 853,993, 864,976, 781,979,
    826,901, 822,950, 937,1135, 1028,1209, 1135,1212, 1160,1314, 1220,1275, 1087,1258, 1094,1226, 1115,1212,
    1139,1223, 1129,1205, 1122,1181, 1150,1275, 1167,1244, 1160,1296, 1205,1254, 1118,1251, 1052,1157, 1091,1178
  ] },
  { y: 1040, k: 3, d: [
    18,155, 6,150, 97,318, 300,575, 408,534, 342,654, 534,833, 522,760, 450,560, 432,636,
    582,798, 696,966, 852,1031, 654,917, 534,760, 560,833, 498,660, 492,642, 540,690, 612,720,
    642,725, 560,702, 612,852, 492,660, 312,528, 414,558, 402,923, 834,1115, 984,1109, 1002,1217,
    1002,1175, 924,1127, 726,971, 516,780, 582,809, 702,869, 672,839, 180,719, 66,467, 132,318,
    138,299, 108,485, 264,473, 300,570, 420,546, 414,600, 210,455, 270,516, 414,600, 456,582,
    450,666, 600,798, 546,671, 630,760, 432,738, 354,516, 318,413, 294,480, 372,528, 306,546,
    222,480, 216,413, 234,839, 660,833, 642,731, 510,690, 432,684, 312,636, 468,560, 420,560,
    150,600, 150,383, 336,492, 330,618, 444,558, 444,671, 480,594, 492,600, 528,606, 252,576,
    72,378, 102,221, 90,318, 246,491, 420,570, 396,594, 156,528, 138,350, 120,245
  ] },
  { y: 540, k: 2.613, d: [
    1196,1421, 1060,1264, 840,1118, 710,893, 767,982, 814,955, 679,940, 476,720, 497,673, 497,627,
    517,741, 679,793, 591,773, 465,898, 852,1102, 992,1081, 966,1144, 971,1018, 888,1045, 976,1212,
    992,1159, 997,1097, 1034,1222, 1149,1290, 1029,1233, 1076,1347, 846,1154, 908,1055, 955,1128, 1060,1154,
    851,1118, 830,982, 830,1055, 720,955, 533,830, 752,872, 773,1238, 762,992, 710,856, 616,804,
    517,820, 746,888, 793,935, 793,1018, 982,1102, 1018,1118, 940,1154, 877,1050, 809,914, 820,893,
    825,955, 877,961, 809,1024, 846,1222, 1118,1227, 1128,1300, 1175,1436, 1264,1410, 1248,1384, 1269,1394,
    1191,1337, 1144,1305, 982,1326, 935,1060, 930,1097, 846,971, 914,1044, 966,1097, 1024,1149, 955,1070,
    945,1118, 1034,1118, 1029,1118, 1044,1285, 1060,1342, 966,1086, 908,1070, 846,955, 793,935, 690,914,
    575,731, 590,731, 632,762, 664,757, 674,804, 637,788, 783,950, 820,1003, 955,1091, 1044,1149,
    1018,1128, 1086,1238, 992,1196, 820,1055, 861,955, 851,976, 814,930, 726,893, 684,825, 554,731,
    350,606, 350,450, 387,496, 429,606, 533,1091, 935,1055, 1165,1326, 1201,1337, 1076,1279, 1081,1306,
    1149,1300, 1180,1242, 1091,1240, 1118,1217, 982,1227, 1076,1222, 1065,1311, 987,1144, 872,1076, 971,1102,
    1003,1170, 1081,1206, 966,1185, 799,1034, 799,914, 705,835, 726,846, 605,773, 439,710, 434,611,
    512,637, 407,560, 407,490, 329,522, 162,382, 136,245, 209,335, 209,298, 267,465, 376,470,
    157,452, 167,371, 214,366, 324,418, 360,465, 340,517, 303,470, 314,543, 465,553, 481,627,
    335,611, 277,423, 183,413, 246,976, 893,1086, 961,1065, 767,1008, 746,997, 653,961, 788,930,
    700,924, 695,804, 679,830, 684,799, 350,746
  ] },
  { y: 300, k: 1.96, d: [
    812,857, 812,944, 800,865, 820,959, 893,1018, 968,1085, 1054,1147, 1051,1155, 1098,1195, 1105,1222,
    1137,1226, 1149,1391, 1313,1399, 1290,1368, 1321,1431, 1262,1375, 1270,1423, 1321,1419, 855,1400, 710,944,
    717,846, 533,795, 502,642, 459,611, 431,493, 466,552, 380,544, 455,665, 541,697, 553,678,
    631,705, 670,818, 729,812, 686,834, 670,775, 729,822, 749,822, 741,804, 725,787, 737,924,
    788,877, 737,873, 796,869, 753,857, 745,905, 839,963, 909,1022, 948,1057, 909,1003, 917,1006,
    953,1038, 1004,1098, 964,1089, 960,1038, 983,1010, 983,1034, 999,1069, 948,1050, 941,1018, 988,1085,
    1023,1057, 1011,1112, 1039,1098, 976,1061, 893,1003, 866,940, 874,940, 855,940, 780,897, 812,897,
    760,892, 431,812, 404,501, 345,485, 419,497, 58,493, 137,246, 106,281, 137,301, 196,293,
    235,324, 208,356, 94,238, 51,238, 200,289, 157,273, 165,324, 212,309, 196,442, 259,520,
    267,317, 274,344, 278,403, 337,442, 396,505, 400,513, 459,540, 511,678, 564,634, 627,748,
    686,780, 615,787, 623,693, 596,654, 596,677, 580,716, 655,736, 489,705, 514,638, 506,575,
    525,626, 419,595, 533,697, 631,775, 710,763, 686,744, 666,740, 608,736, 612,716, 533,638,
    572,634, 576,646, 564,677, 549,622, 431,579, 361,473, 388,454, 411,462, 314,438, 294,415,
    196,356, 251,395, 200,293, 153,238, 102,195, 137,297, 169,277, 165,277, 188,242, 216,371,
    290,516, 368,556, 333,462, 368,454, 372,505, 419,501
  ] },
  { y: 150, k: 3, d: [
    912,1127, 792,1001, 744,923, 750,923, 750,846, 726,1190, 756,977, 672,935, 600,762, 576,839,
    576,678, 390,636, 318,480, 198,383, 104,383, 54,239, 54,191, 84,311, 204,341, 240,396,
    210,407, 288,461, 390,503, 450,575, 474,593, 450,581, 438,617, 474,815, 786,893, 756,875,
    696,863, 726,1019, 876,1085, 912,1217, 1098,1246
  ] }
];

function even(v) {
  return 2 * Math.round(v / 2);
}

function drawBars() {
  var path = "";
  var x = 11;
  runs.forEach(function (run) {
    for (var i = 0; i < run.d.length; i += 2) {
      path += "M" + x + " " + even(run.y + run.d[i] / run.k) + "V" + even(run.y + run.d[i + 1] / run.k);
      x += 4;
    }
  });
  document.getElementById("bars").setAttribute("d", path);
}

// price axis
function drawPrices() {
  var labels = ["0.70630", "0.70260", "0.69900", "0.69530", "0.69170", "0.68800", "", "0.68070", "0.67700", "0.67340",
    "0.66970", "0.66610", "0.66240", "0.65880", "0.65510", "0.65140", "0.64780", "0.64410", "0.64050", "0.63680", "0.63320"];
  // value, y, color class
  var tags = [
    ["0.70447", 183, "tag-red"],
    ["0.69416", 369, "tag-red"],
    ["0.68511", 535, ""],
    ["0.68433", 547, "tag-red"],
    ["0.67289", 755, ""],
    ["0.65842", 1015, "tag-red"],
    ["0.64678", 1225, "tag-red"],
    ["0.64300", 1293, "tag-red"]
  ];
  var out = "";
  labels.forEach(function (t, i) {
    var y = 153 + i * 66;
    out += '<path class="frame" d="M2792 ' + y + 'h5"/>';
    out += '<text x="2801" y="' + (y + 7) + '" textLength="66">' + t + '</text>';
  });
  tags.forEach(function (t) {
    out += '<rect class="' + t[2] + '" x="2796" y="' + (t[1] - 11) + '" width="78" height="22"/>';
    out += '<text class="white" x="2801" y="' + (t[1] + 7) + '" textLength="66">' + t[0] + '</text>';
  });
  document.getElementById("prices").innerHTML = out;
}

function drawTicks() {
  var path = "";
  for (var x = 11; x < 2200; x += 128) {
    path += "M" + x + " 1538v6";
  }
  document.getElementById("ticks").setAttribute("d", path);
}

function drawNet() {
  var top = "";
  var bottom = "";
  for (var i = 0; i < 8; i++) {
    top += "M" + (3 + i * 6) + " 0v" + (17 - i * 2);
    bottom += "M" + (3 + i * 6) + " 26v" + (-6 - i * 2);
  }
  document.getElementById("net-top").setAttribute("d", top);
  document.getElementById("net-bottom").setAttribute("d", bottom);
}

drawBars();
drawPrices();
drawTicks();
drawNet();
```
